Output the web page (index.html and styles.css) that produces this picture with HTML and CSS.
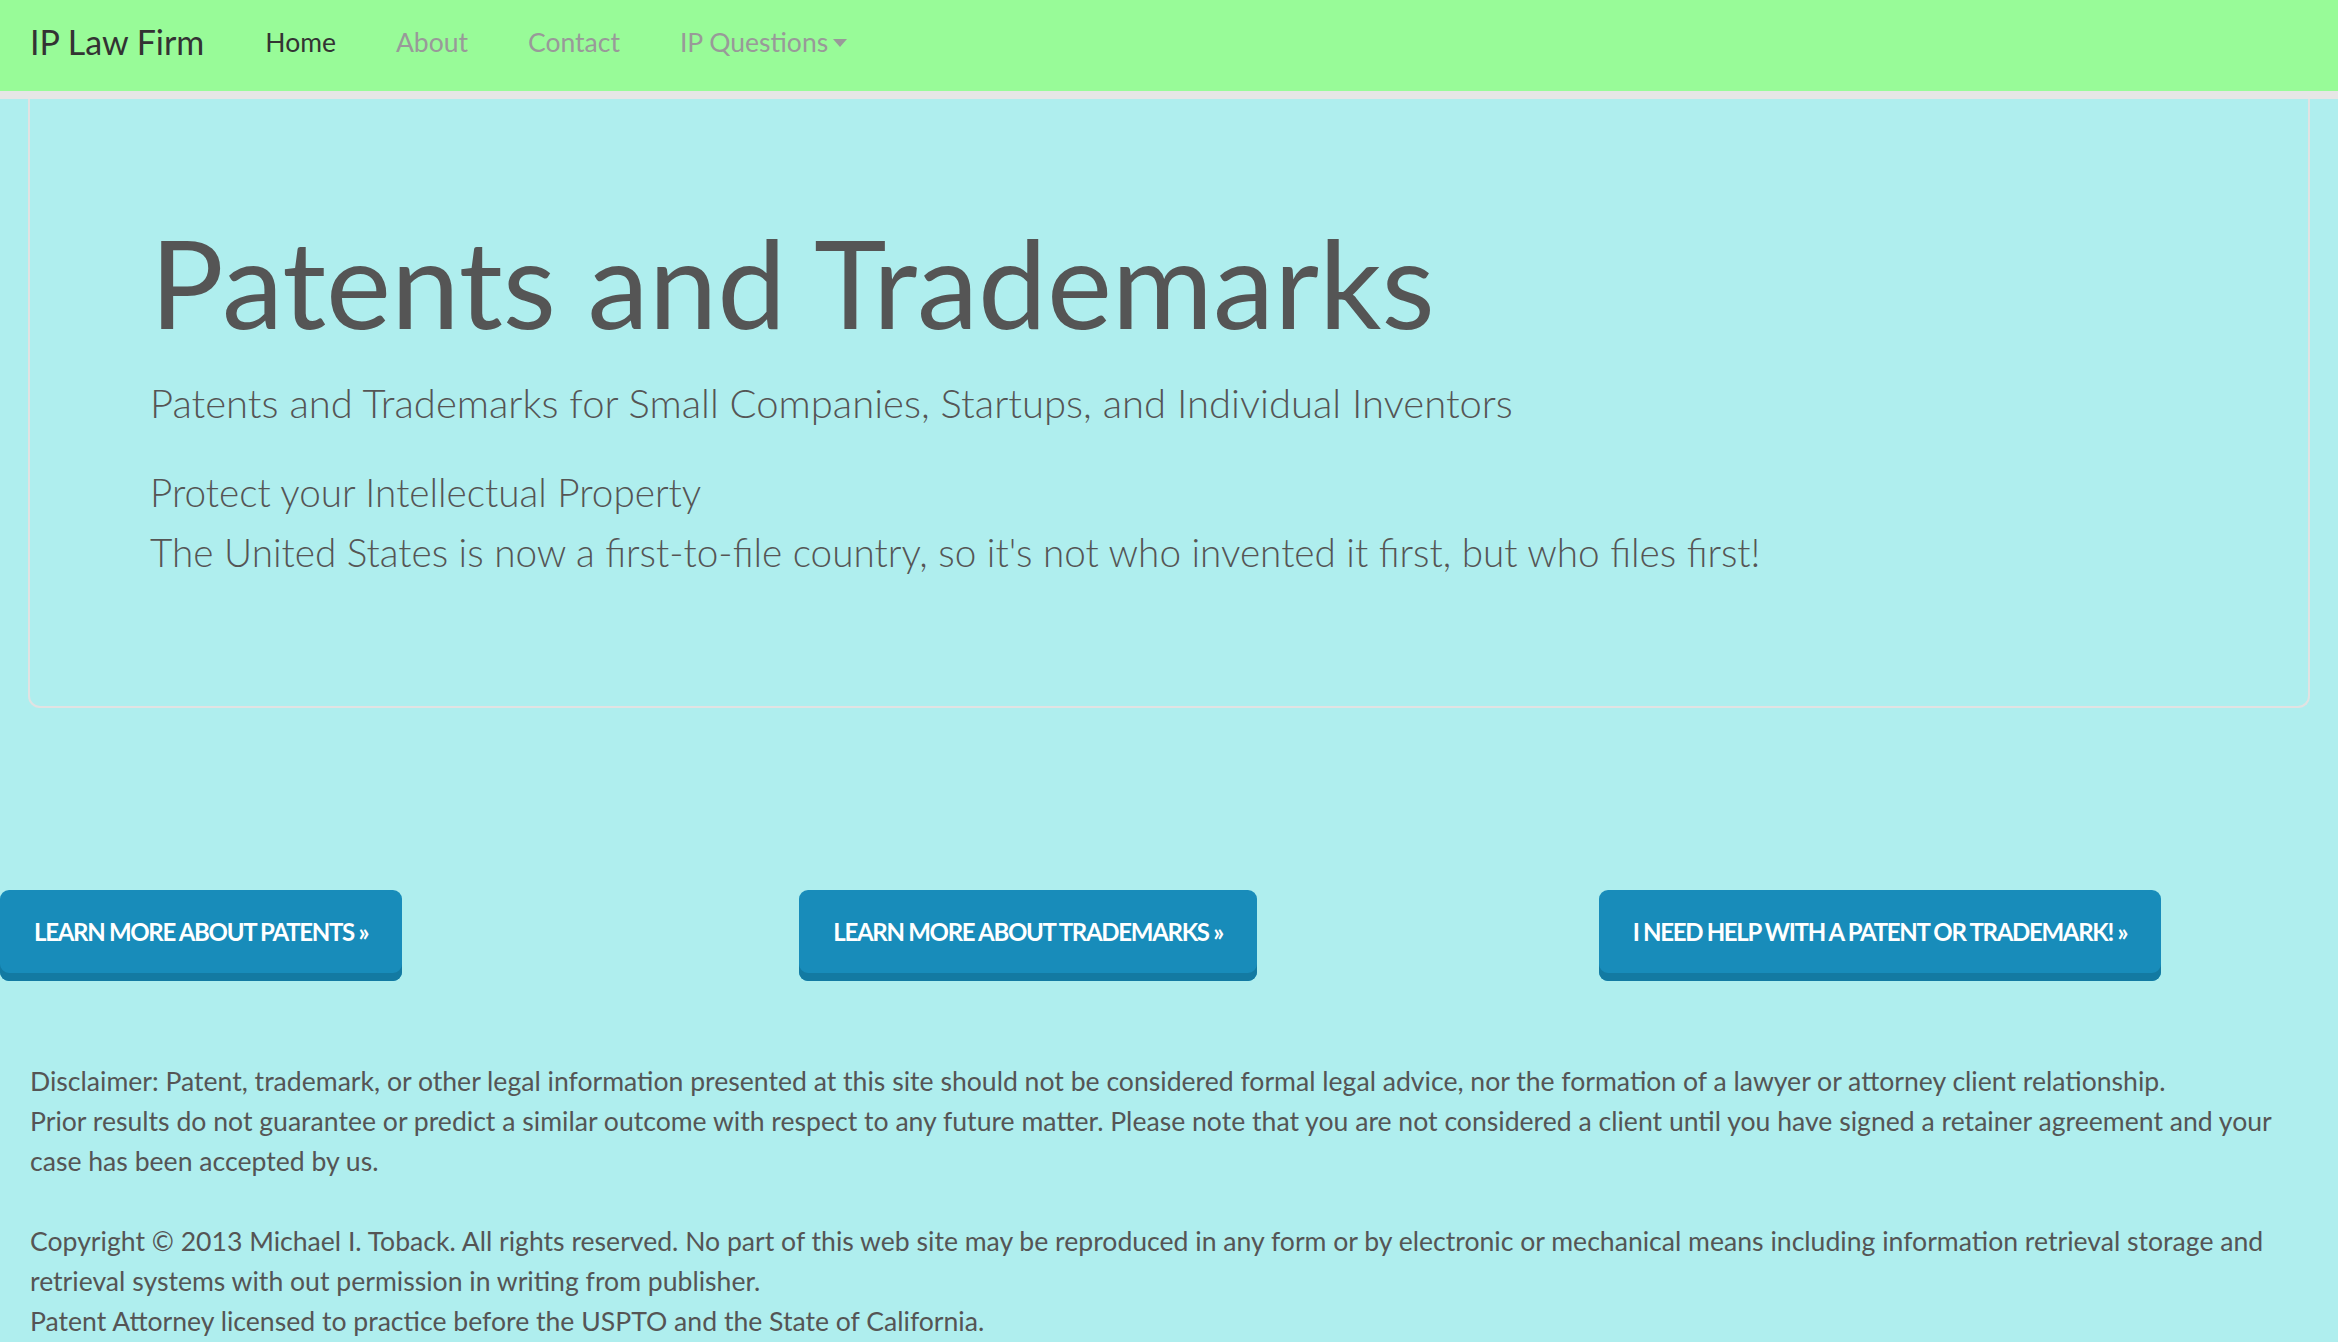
FILE: index.html
```html
<!DOCTYPE html>
<html lang="en">
<head>
<meta charset="utf-8">
<title>IP Law Firm</title>
<link rel="stylesheet" href="styles.css">
</head>
<body>
<nav class="navbar">
  <a class="brand" href="#">IP Law Firm</a>
  <ul class="nav">
    <li><a class="nav-link active" href="#">Home</a></li>
    <li><a class="nav-link" href="#">About</a></li>
    <li><a class="nav-link" href="#">Contact</a></li>
    <li><a class="nav-link" href="#">IP Questions<span class="caret"></span></a></li>
  </ul>
</nav>
<section class="jumbotron">
  <h1 class="jumbo-title">Patents and Trademarks</h1>
  <p class="lead">Patents and Trademarks for Small Companies, Startups, and Individual Inventors</p>
  <p class="lead lead-second">Protect your Intellectual Property<br>The United States is now a first-to-file country, so it's not who invented it first, but who files first!</p>
</section>
<div class="actions">
  <div class="col"><a class="btn" href="#">Learn more about patents &raquo;</a></div>
  <div class="col"><a class="btn" href="#">Learn more about trademarks &raquo;</a></div>
  <div class="col"><a class="btn" href="#">I need help with a patent or trademark! &raquo;</a></div>
</div>
<footer class="footer">
  <p>Disclaimer: Patent, trademark, or other legal information presented at this site should not be considered formal legal advice, nor the formation of a lawyer or attorney client relationship.<br>Prior results do not guarantee or predict a similar outcome with respect to any future matter. Please note that you are not considered a client until you have signed a retainer agreement and your case has been accepted by us.</p>
  <p>Copyright &copy; 2013 Michael I. Toback. All rights reserved. No part of this web site may be reproduced in any form or by electronic or mechanical means including information retrieval storage and retrieval systems with out permission in writing from publisher.<br>Patent Attorney licensed to practice before the USPTO and the State of California.</p>
</footer>
</body>
</html>
```

FILE: styles.css
```css
html, body {
  margin: 0;
  padding: 0;
}
body {
  background: #afeeee;
  font-family: Lato, "Noto Sans", sans-serif;
  color: #555555;
  overflow: hidden;
}
a { text-decoration: none; }

.navbar {
  display: flex;
  align-items: center;
  height: 83px;
  padding: 0 0 8px 30px;
  background: #98fb98;
  border-bottom: 8px solid #e6e6e6;
}
.brand {
  font-size: 34px;
  color: #333333;
  margin-right: 61px;
}
.nav {
  display: flex;
  gap: 60px;
  list-style: none;
  margin: 0;
  padding: 0;
}
.nav-link {
  font-size: 26.5px;
  color: #999999;
  display: flex;
  align-items: center;
}
.nav-link.active { color: #333333; }
.caret {
  display: inline-block;
  margin-left: 5px;
  margin-top: 3px;
  border-left: 7px solid transparent;
  border-right: 7px solid transparent;
  border-top: 8px solid #999999;
}

.jumbotron {
  margin: 0 28px;
  padding: 113px 120px 124px;
  border: 2px solid #e2e2e2;
  border-top: 0;
  border-radius: 0 0 12px 12px;
}
.jumbo-title {
  margin: 0;
  font-size: 123px;
  line-height: 140px;
  font-weight: 400;
  color: #555555;
}
.lead {
  margin: 21px 0 0;
  font-size: 40px;
  line-height: 60px;
  font-weight: 300;
}
.lead-second {
  margin-top: 29px;
  font-size: 38.7px;
}

.actions {
  display: grid;
  grid-template-columns: repeat(3, 1fr);
  margin: 182px -30px 0;
}
.col { padding: 0 30px; }
.btn {
  display: inline-block;
  height: 91px;
  line-height: 83px;
  padding: 0 34px 8px;
  box-sizing: border-box;
  background: #188cba;
  color: #ffffff;
  font-size: 24px;
  letter-spacing: -1.3px;
  font-weight: 700;
  text-transform: uppercase;
  border-radius: 9px;
  box-shadow: inset 0 -8px 0 #137aa2;
}

.footer {
  padding: 80px 10px 0 30px;
}
.footer p {
  margin: 0 0 40px;
  font-size: 26.6px;
  line-height: 40px;
}
```
